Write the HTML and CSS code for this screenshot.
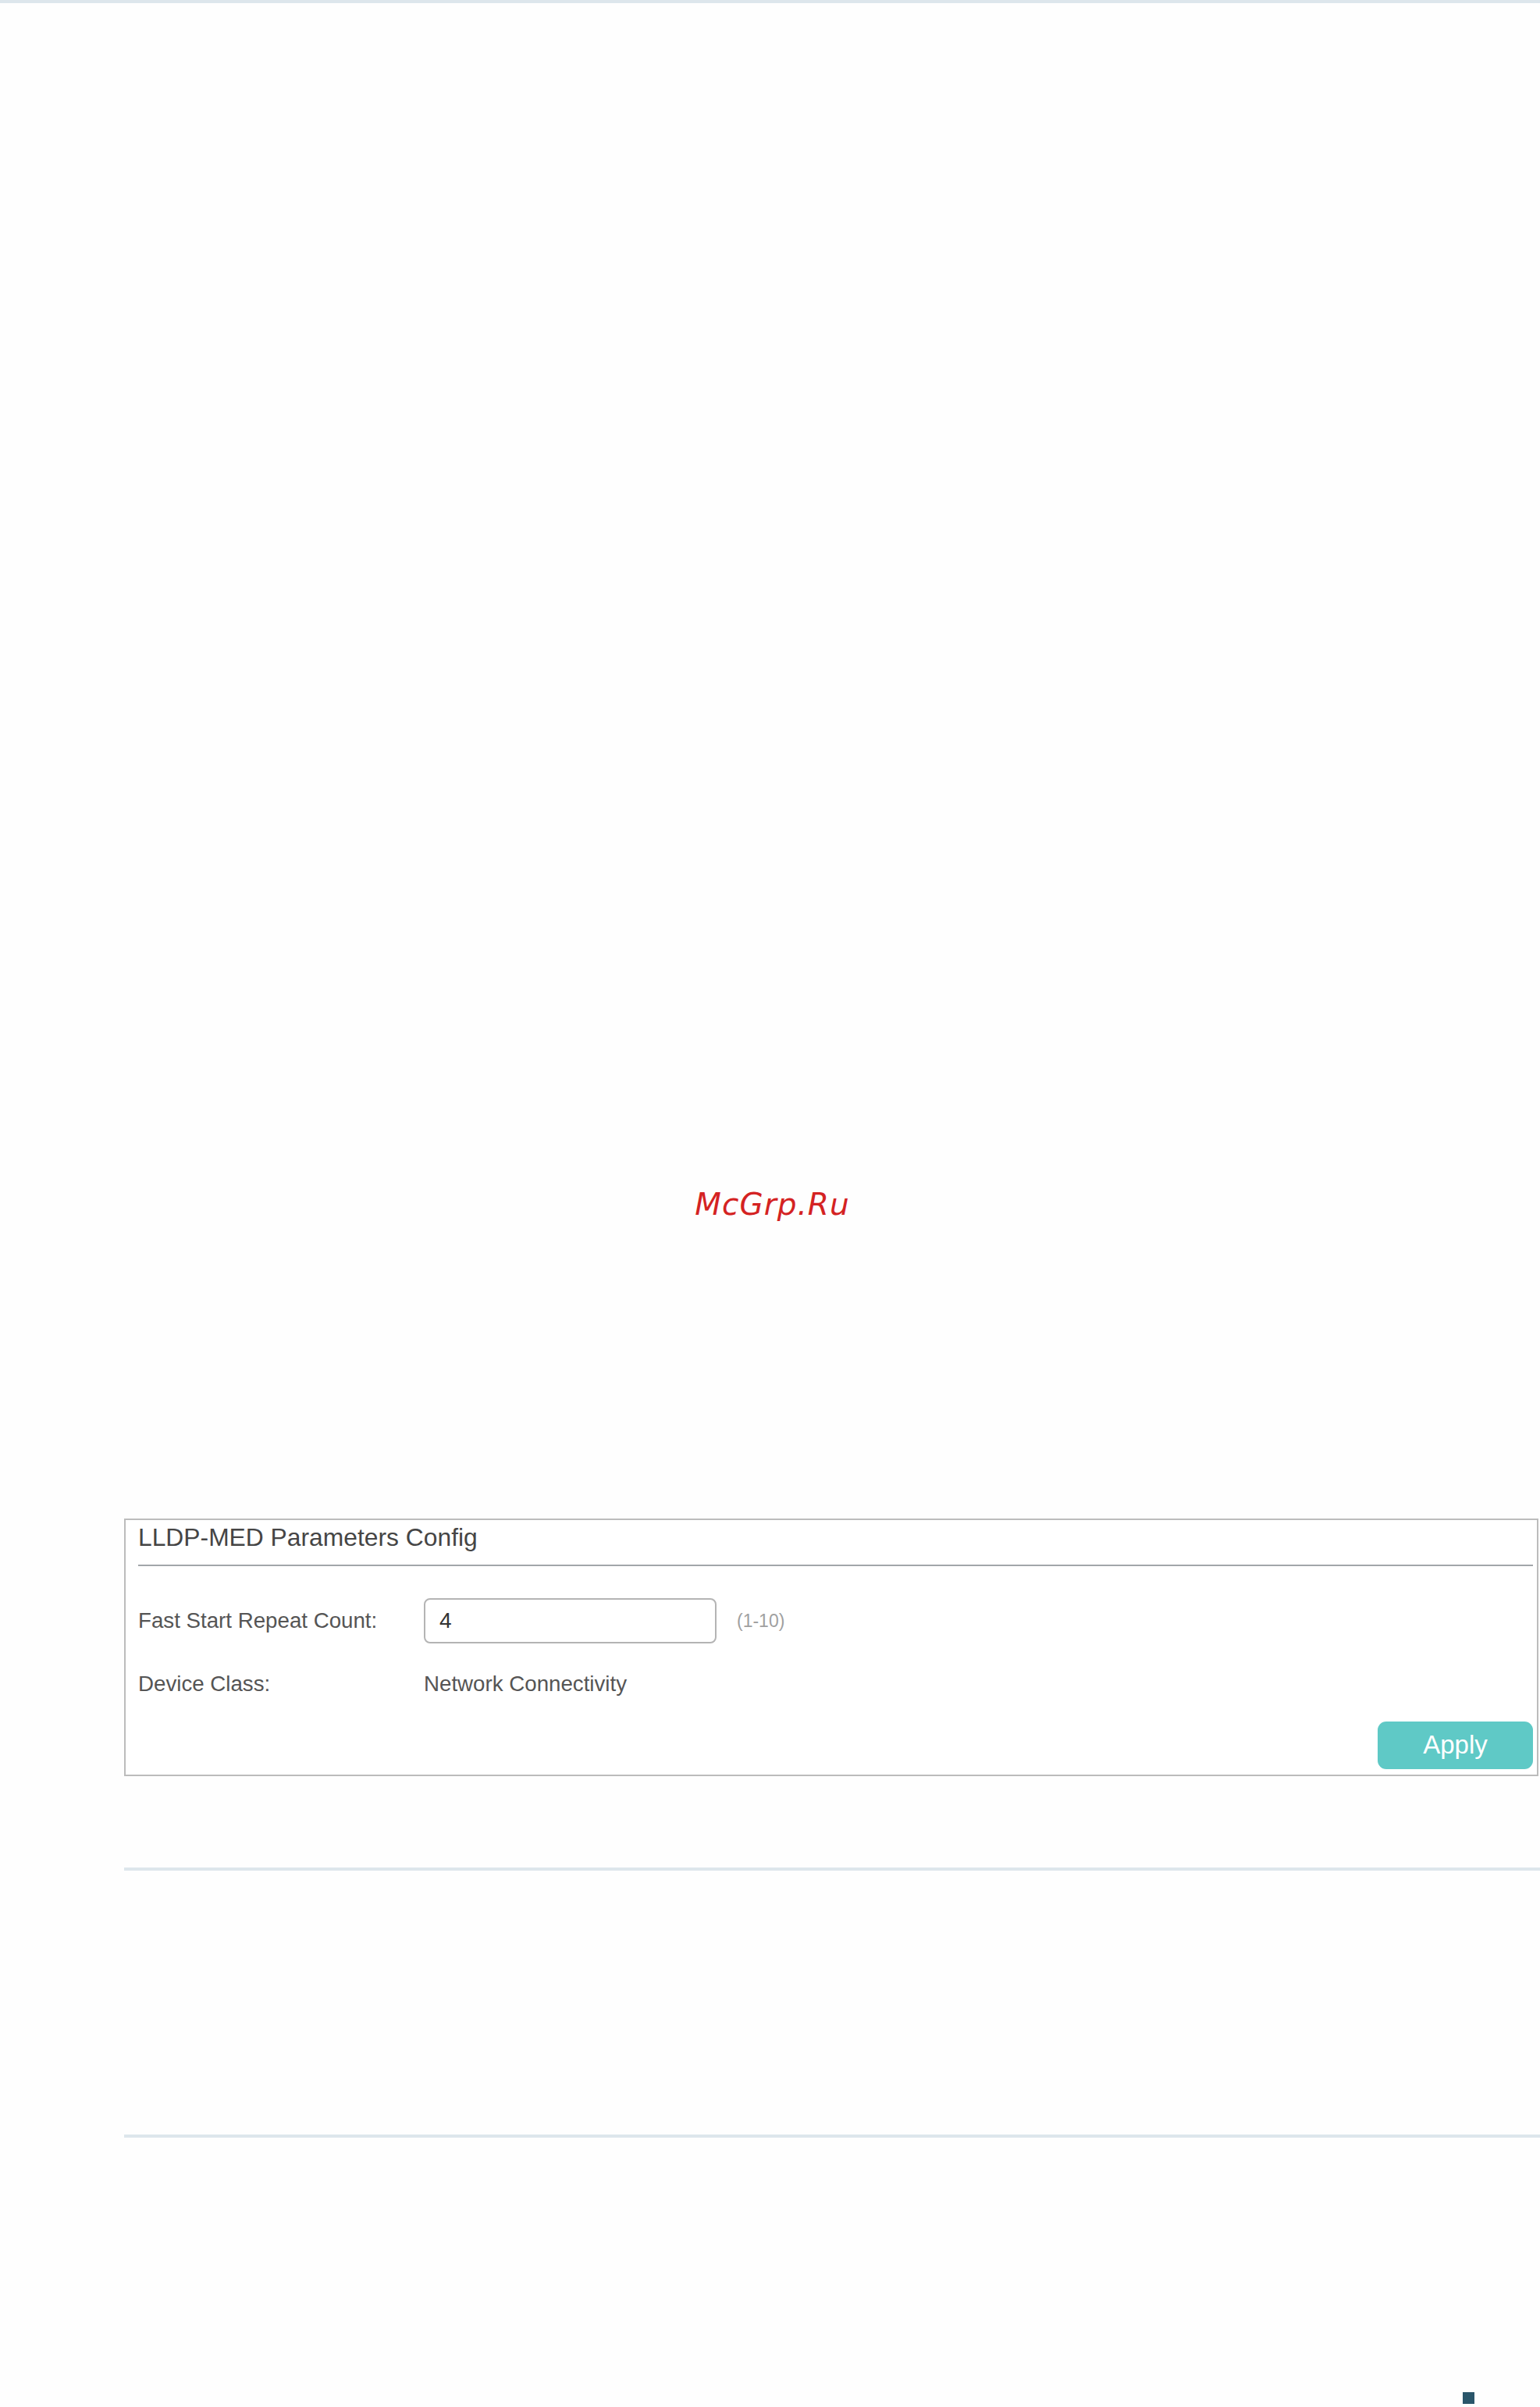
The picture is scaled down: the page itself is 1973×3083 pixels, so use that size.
FILE: index.html
```html
<!DOCTYPE html>
<html lang="en">
<head>
  <meta charset="UTF-8">
  <title>LLDP-MED Parameters Config</title>
  <link rel="stylesheet" href="styles.css">
</head>
<body>

<div class="topbar"></div>

<div class="watermark">McGrp.Ru</div>

<div class="panel">
  <div class="panel-title">LLDP-MED Parameters Config</div>

  <div class="row row-first">
    <label class="label" for="fastCount">Fast Start Repeat Count:</label>
    <input class="field" type="text" id="fastCount" value="4">
    <span class="hint">(1-10)</span>
  </div>

  <div class="row">
    <span class="label">Device Class:</span>
    <span class="value">Network Connectivity</span>
  </div>

  <div class="actions">
    <button class="btn-apply">Apply</button>
  </div>
</div>

<div class="rule rule-first"></div>
<div class="rule rule-second"></div>

<div class="corner"></div>

</body>
</html>
```

FILE: styles.css
```css
html, body {
  margin: 0;
  padding: 0;
  background: #fefefe;
}

body {
  width: 1973px;
  height: 3083px;
  overflow: hidden;
  font-family: 'Liberation Sans', Arial, sans-serif;
  color: #555;
}

.topbar {
  height: 4px;
  background-color: #dde6ec;
}

.watermark {
  margin-top: 1515px;
  height: 48px;
  line-height: 48px;
  padding-left: 6px;
  text-align: center;
  font-family: 'DejaVu Sans', sans-serif;
  font-style: italic;
  font-size: 39px;
  letter-spacing: 1px;
  color: #d42222;
}

.panel {
  margin: 378px 0 0 159px;
  width: 1808px;
  height: 326px;
  border: 2px solid #bcbcbc;
  background: #fff;
}

.panel-title {
  margin: 0 5px 0 16px;
  padding: 2px 0 15px 0;
  line-height: 40px;
  font-size: 31.8px;
  color: #454545;
  border-bottom: 2px solid #a2a6aa;
}

.row {
  display: flex;
  align-items: center;
  margin-left: 16px;
  font-size: 27.7px;
  line-height: 34px;
  margin-top: 35px;
}

.row-first {
  margin-top: 41px;
}

.label {
  width: 366px;
  color: #555;
}

.value {
  color: #555;
}

.field {
  box-sizing: border-box;
  width: 375px;
  height: 58px;
  padding: 0 18px;
  border: 2px solid #b4b4b4;
  border-radius: 8px;
  font-family: 'Liberation Sans', Arial, sans-serif;
  font-size: 28px;
  color: #333;
  background: #fff;
  outline: none;
}

.hint {
  margin-left: 26px;
  font-size: 23px;
  color: #a0a0a0;
}

.actions {
  display: flex;
  justify-content: flex-end;
  margin: 31px 5px 0 0;
}

.btn-apply {
  width: 199px;
  height: 61px;
  border: none;
  border-radius: 11px;
  background-color: #5fc9c6;
  color: white;
  font-family: 'Liberation Sans', Arial, sans-serif;
  font-size: 33px;
  padding: 0 0 2px 0;
  cursor: pointer;
}

.rule {
  margin-left: 159px;
  height: 4px;
  background-color: #dde6ec;
}

.rule-first {
  margin-top: 117px;
}

.rule-second {
  margin-top: 338px;
}

.corner {
  margin: 326px 0 0 1874px;
  width: 15px;
  height: 15px;
  background-color: #2a566a;
}
```
